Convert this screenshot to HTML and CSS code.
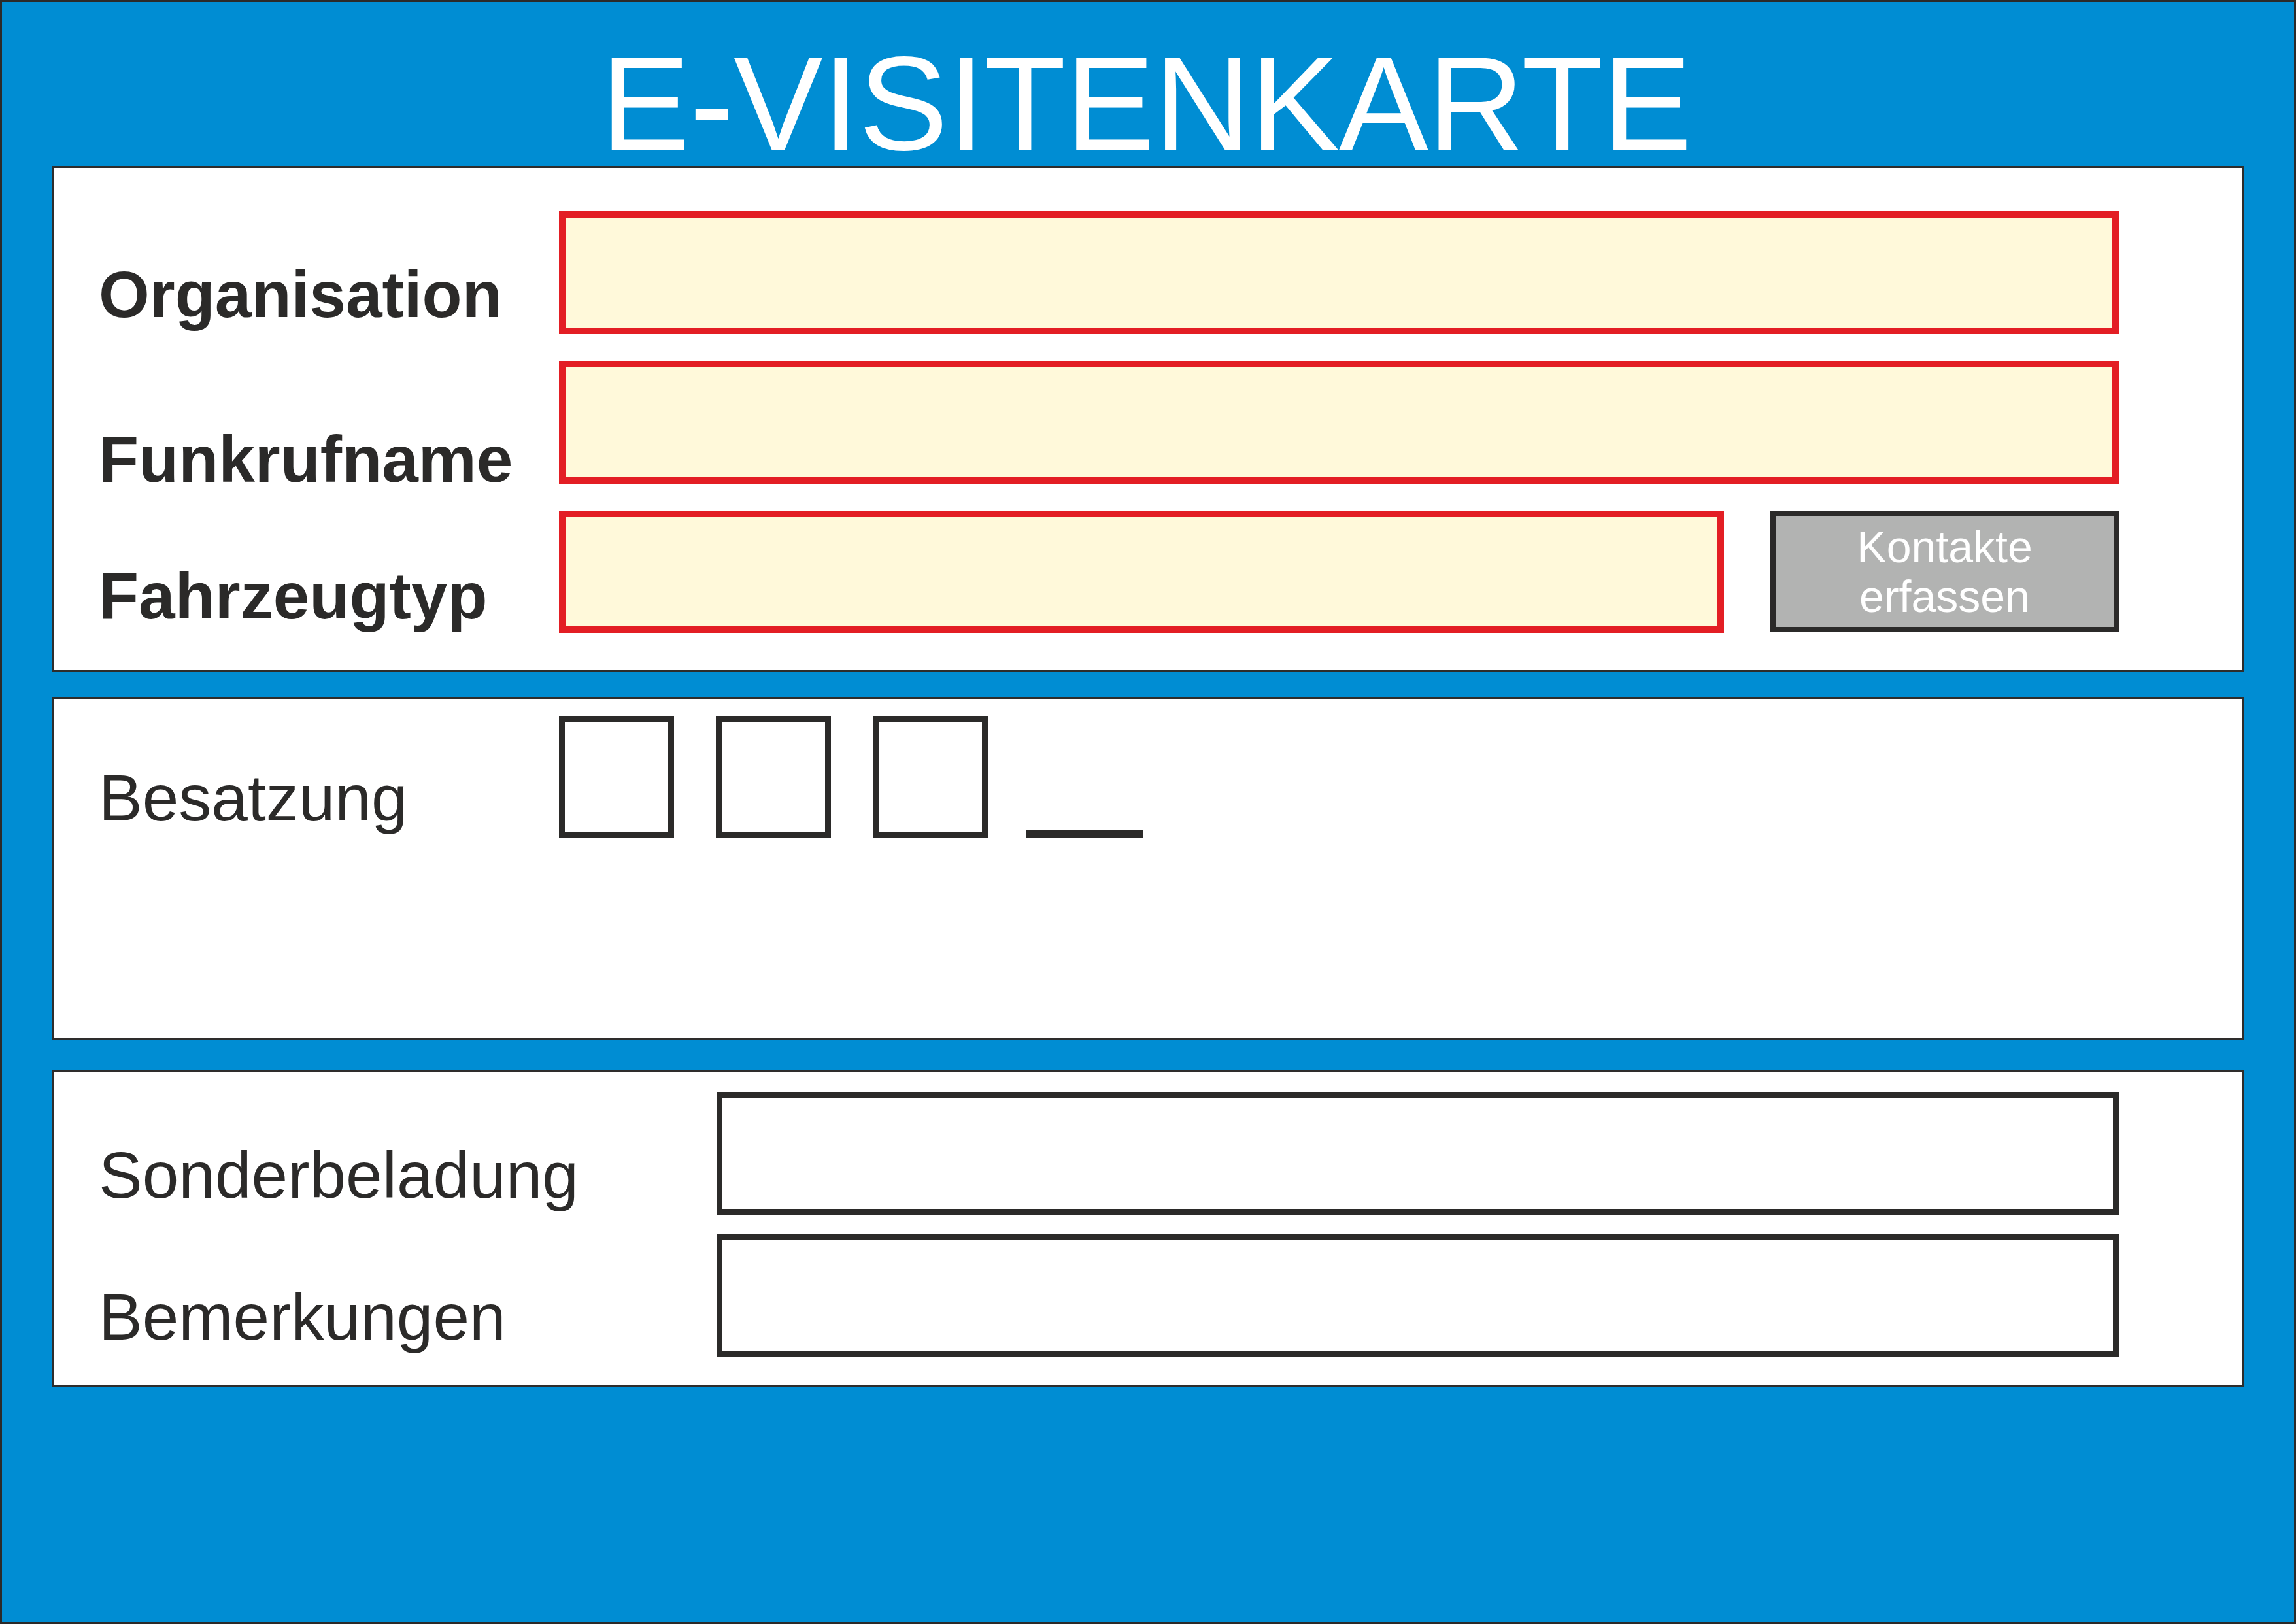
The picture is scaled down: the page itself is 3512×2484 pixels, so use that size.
FILE: index.html
```html
<!DOCTYPE html>
<html lang="de">
<head>
<meta charset="utf-8">
<title>E-Visitenkarte</title>
<link rel="stylesheet" href="styles.css">
</head>
<body>
<div class="card">
  <header class="head"><h1 class="title">E-VISITENKARTE</h1></header>

  <section class="panel panel-main">
    <div class="row">
      <div class="label bold lbl-org">Organisation</div>
      <div class="field req"></div>
    </div>
    <div class="row">
      <div class="label bold lbl-funk">Funkrufname</div>
      <div class="field req"></div>
    </div>
    <div class="row">
      <div class="label bold lbl-fahr">Fahrzeugtyp</div>
      <div class="fahr">
        <div class="field req"></div>
        <div class="btn">Kontakte<br>erfassen</div>
      </div>
    </div>
  </section>

  <section class="panel panel-crew">
    <div class="row">
      <div class="label lbl-crew">Besatzung</div>
      <div class="crew">
        <div class="box"></div>
        <div class="box"></div>
        <div class="box"></div>
        <div class="dash"></div>
      </div>
    </div>
  </section>

  <section class="panel panel-extra">
    <div class="row row-extra">
      <div class="label lbl-extra">Sonderbeladung</div>
      <div class="field plain"></div>
    </div>
    <div class="row row-extra">
      <div class="label lbl-extra">Bemerkungen</div>
      <div class="field plain"></div>
    </div>
  </section>
</div>
</body>
</html>
```

FILE: styles.css
```css
html, body {
  margin: 0;
  padding: 0;
}
body {
  width: 3512px;
  height: 2484px;
  font-family: "Liberation Sans", Arial, sans-serif;
}
.card {
  box-sizing: border-box;
  width: 3512px;
  height: 2484px;
  border: 3px solid #2b2a29;
  background: #008dd3;
  display: flex;
  flex-direction: column;
}
.head {
  height: 251px;
  box-sizing: border-box;
  padding-top: 60px;
}
.title {
  margin: 0;
  text-align: center;
  color: #ffffff;
  font-weight: normal;
  font-size: 205px;
  line-height: 190px;
  letter-spacing: -1px;
  padding-right: 6px;
}
.panel {
  box-sizing: border-box;
  background: #ffffff;
  border: 3px solid #2e2d2c;
  margin: 0 77px 0 76px;
  padding-left: 69px;
  padding-right: 188px;
}
.panel-main {
  height: 774px;
  padding-top: 66px;
  display: flex;
  flex-direction: column;
  gap: 41px;
}
.panel-crew {
  margin-top: 38px;
  height: 525px;
  padding-top: 26px;
}
.panel-extra {
  margin-top: 46px;
  height: 485px;
  padding-top: 31px;
  display: flex;
  flex-direction: column;
  gap: 30px;
}
.row {
  display: flex;
  align-items: flex-start;
  height: 188px;
}
.label {
  width: 704px;
  flex: none;
  color: #2b2a29;
  font-size: 100px;
  line-height: 100px;
  white-space: nowrap;
}
.bold { font-weight: bold; }
.lbl-org { margin-top: 77px; }
.lbl-funk { margin-top: 100px; }
.lbl-fahr { margin-top: 80px; }
.lbl-crew { margin-top: 75px; }
.row-extra { height: 187px; }
.row-extra .label { width: 945px; }
.lbl-extra { margin-top: 76px; }

.field {
  box-sizing: border-box;
  flex: 1;
  height: 188px;
}
.req {
  border: 10px solid #e31e24;
  background: #fff9da;
}
.plain {
  height: 187px;
  border: 9px solid #2b2a29;
  background: #ffffff;
}
.fahr {
  flex: 1;
  display: flex;
  gap: 71px;
}
.fahr .field { height: 187px; }
.btn {
  box-sizing: border-box;
  flex: none;
  width: 533px;
  height: 186px;
  border: 8px solid #2b2a29;
  background: #b2b3b2;
  color: #ffffff;
  font-size: 68px;
  line-height: 76px;
  text-align: center;
  display: flex;
  align-items: center;
  justify-content: center;
}
.crew {
  display: flex;
  align-items: flex-end;
  gap: 64px;
}
.box {
  box-sizing: border-box;
  width: 176px;
  height: 187px;
  border: 9px solid #2b2a29;
}
.dash {
  width: 178px;
  height: 12px;
  background: #2b2a29;
  margin-left: -5px;
}
```
